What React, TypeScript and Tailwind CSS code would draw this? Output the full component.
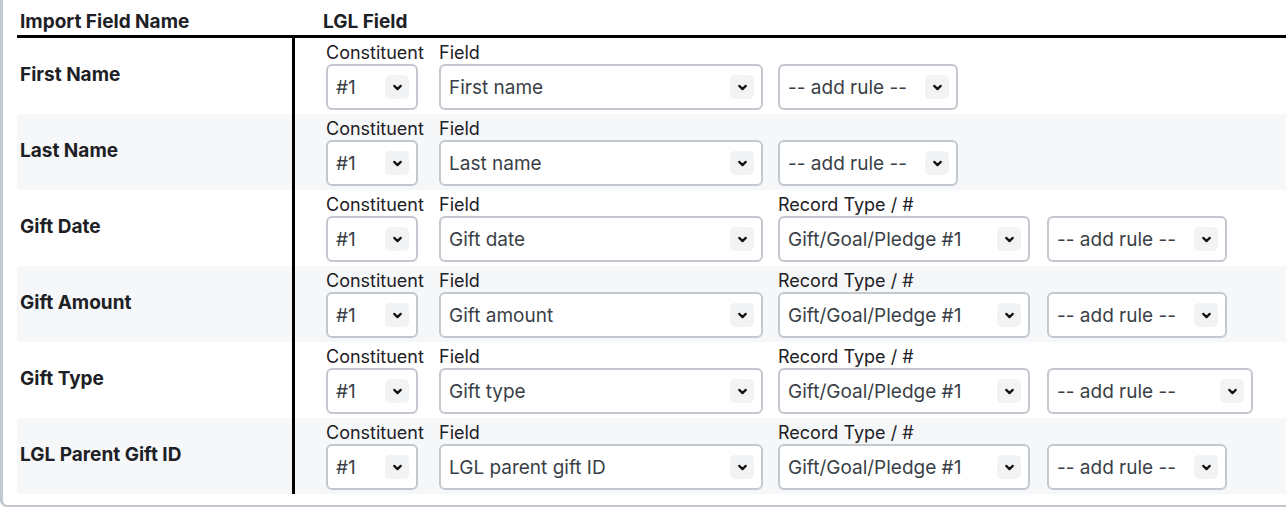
import { ChevronDown } from "lucide-react"

type Row = {
  name: string
  field: string
  record?: string
  ruleWidth?: string
}

const rows: Row[] = [
  { name: "First Name", field: "First name" },
  { name: "Last Name", field: "Last name" },
  { name: "Gift Date", field: "Gift date", record: "Gift/Goal/Pledge #1" },
  { name: "Gift Amount", field: "Gift amount", record: "Gift/Goal/Pledge #1" },
  { name: "Gift Type", field: "Gift type", record: "Gift/Goal/Pledge #1", ruleWidth: "w-[206px]" },
  { name: "LGL Parent Gift ID", field: "LGL parent gift ID", record: "Gift/Goal/Pledge #1" },
]

function Select({ value, width }: { value: string; width: string }) {
  return (
    <div
      className={`${width} h-[46px] flex items-center justify-between pl-[8px] pr-[7px] pt-[2px] bg-white border-2 border-[#c3c8cf] rounded-[6px] text-[19px] text-[#3a3f47]`}
    >
      <span className="whitespace-nowrap">{value}</span>
      <span className="w-[24px] h-[24px] -mt-[2px] rounded-[5px] bg-[#f1f3f5] flex items-center justify-center">
        <ChevronDown size={13} strokeWidth={4} className="text-[#111]" />
      </span>
    </div>
  )
}

function Group({ label, children, className }: { label: string; children: React.ReactNode; className: string }) {
  return (
    <div className={`flex flex-col ${className}`}>
      <div className="h-[22px] leading-[22px] text-[18px] text-[#1d2024] whitespace-nowrap">{label || "\u00a0"}</div>
      {children}
    </div>
  )
}

export default function App() {
  return (
    <div className="w-[1286px] h-[508px] overflow-hidden bg-white" style={{ fontFamily: "Inter, 'Noto Sans', sans-serif" }}>
      <div className="w-[1320px] h-[507px] border-l-[3px] border-b-2 border-[#c3c8cf] rounded-bl-[7px] pl-[14px] pt-[9px]">
        <div className="flex h-[29px] items-start border-b-[3px] border-black font-bold text-[19px] text-[#1d2024]">
          <div className="w-[278px] pl-[3px] pt-[1px] leading-[24px]">Import Field Name</div>
          <div className="pl-[28px] pt-[1px] leading-[24px]">LGL Field</div>
        </div>
        {rows.map((r, i) => (
          <div key={r.name} className={`flex h-[76px] ${i % 2 === 1 ? "bg-[#f6f7f9]" : "bg-white"}`}>
            <div className="w-[275px] pl-[3px] pb-[1px] flex items-center font-bold text-[19px] text-[#1d2024]">{r.name}</div>
            <div className="border-l-[3px] border-black pl-[31px] pt-[4px] flex">
              <Group label="Constituent" className="w-[113px]">
                <Select value="#1" width="w-[92px]" />
              </Group>
              <Group label="Field" className="w-[339px]">
                <Select value={r.field} width="w-[324px]" />
              </Group>
              {r.record ? (
                <>
                  <Group label="Record Type / #" className="w-[269px]">
                    <Select value={r.record} width="w-[252px]" />
                  </Group>
                  <Group label="">
                    <Select value="-- add rule --" width={r.ruleWidth ?? "w-[180px]"} />
                  </Group>
                </>
              ) : (
                <Group label="">
                  <Select value="-- add rule --" width="w-[180px]" />
                </Group>
              )}
            </div>
          </div>
        ))}
      </div>
    </div>
  )
}
